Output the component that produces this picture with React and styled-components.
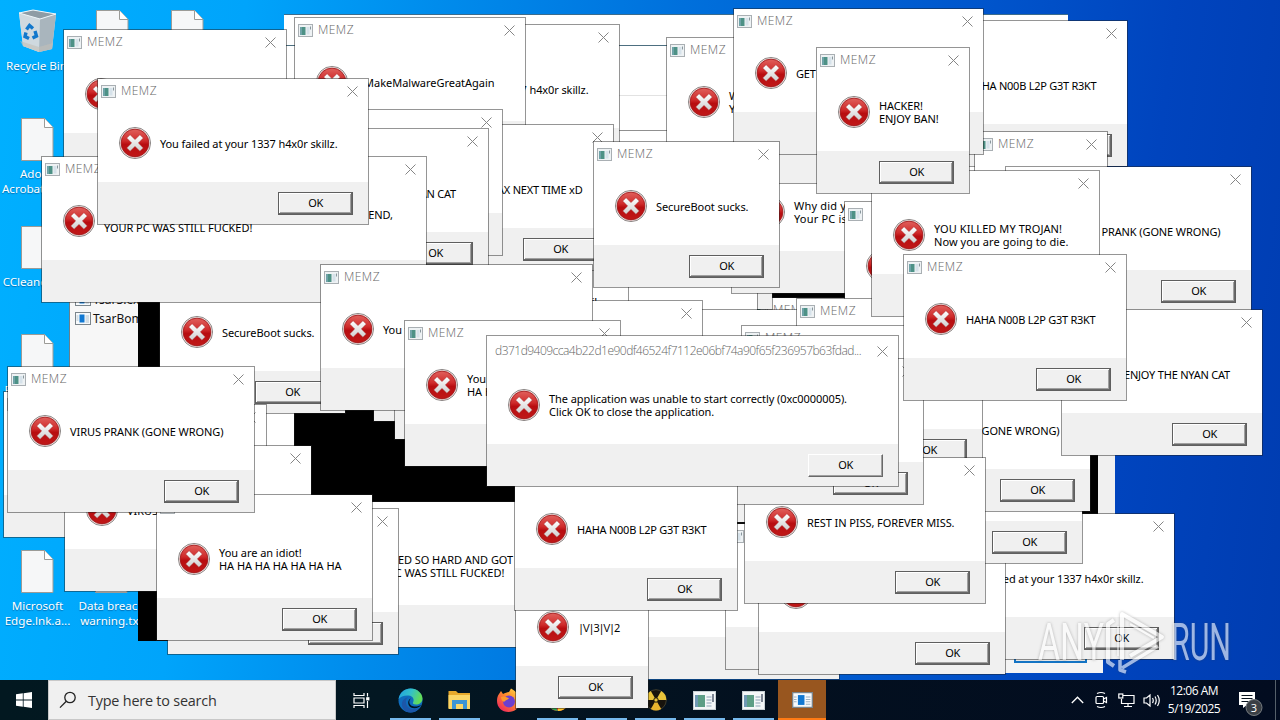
import React, { useLayoutEffect, useRef, useState } from "react";
import styled, { createGlobalStyle } from "styled-components";

const GlobalStyle = createGlobalStyle`
  * {
    box-sizing: border-box;
  }
  body {
    margin: 0;
    overflow: hidden;
    font-family: "Noto Sans", "Open Sans", sans-serif;
  }
`;

const Screen = styled.div`
  width: 1280px;
  height: 720px;
  position: relative;
  overflow: hidden;
  display: flex;
  flex-direction: column;
  background: linear-gradient(
    97deg,
    #00b0ff 0%,
    #00a4fb 18%,
    #008cec 32%,
    #0070dc 50%,
    #0055cc 72%,
    #0044be 86%,
    #003cb0 100%
  );
`;

const Desktop = styled.div`
  flex: 1;
  position: relative;
`;

/* desktop shortcuts */

const Shortcut = styled.div`
  position: absolute;
  left: ${(p) => p.$x}px;
  top: ${(p) => p.$y}px;
  width: 75px;
  display: flex;
  flex-direction: column;
  align-items: center;
  gap: ${(p) => p.$gap || 5}px;
`;

const ShortcutLabel = styled.div`
  color: #fff;
  font-size: 11.6px;
  line-height: 15px;
  text-align: center;
  white-space: pre;
  text-shadow: 0 1px 1px rgba(0, 40, 90, 0.45);
`;

/* windows, all placed freely on the desktop */

const Frame = styled.div`
  position: absolute;
  left: ${(p) => p.$x}px;
  top: ${(p) => p.$y}px;
  width: ${(p) => p.$w}px;
  height: ${(p) => p.$h || 147}px;
  border: 1px solid rgba(30, 30, 30, 0.47);
  background: #fff;
  background-clip: padding-box;
  display: flex;
  flex-direction: column;
`;

const TitleBar = styled.div`
  height: ${(p) => p.$h}px;
  flex: none;
  display: flex;
  align-items: center;
  padding: 0 10px 0 ${(p) => (p.$bare ? 8 : 3)}px;
`;

const Title = styled.div`
  flex: 1;
  font-family: "Open Sans", "Noto Sans", sans-serif;
  font-weight: 300;
  font-size: 12px;
  line-height: 16px;
  color: #666;
  margin-left: ${(p) => (p.$bare ? 0 : 5)}px;
  padding-bottom: 1px;
  white-space: nowrap;
`;

const Body = styled.div`
  height: 78px;
  flex: none;
  display: flex;
  align-items: center;
  padding-left: 20px;
`;

const Message = styled.div`
  margin-left: 8px;
  font-size: 11px;
  line-height: 13px;
  color: #000;
  padding-top: ${(p) => (p.$two ? 0 : 1)}px;
`;

const Line = styled.span`
  display: inline-block;
  white-space: pre;
`;

const Footer = styled.div`
  flex: 1;
  background: #f0f0f0;
  display: flex;
  justify-content: flex-end;
  align-items: flex-start;
  padding: 10px 15px 0 0;
`;

const OkButton = styled.div`
  width: 75px;
  height: 23px;
  background: #f0f0f0;
  border: 1px solid ${(p) => (p.$plain ? "#696969" : "#5f5f5f")};
  border-top-color: ${(p) => (p.$plain ? "#fff" : "#5f5f5f")};
  border-left-color: ${(p) => (p.$plain ? "#fff" : "#5f5f5f")};
  box-shadow: ${(p) =>
    p.$plain
      ? "inset -1px -1px 0 #a0a0a0"
      : "inset -1px -1px 0 #696969, inset 1px 1px 0 #fff, inset -2px -2px 0 #a0a0a0"};
  display: flex;
  align-items: center;
  justify-content: center;
  font-size: 11px;
  line-height: 13px;
  letter-spacing: -0.4px;
  padding-bottom: 2px;
  color: #000;
`;

const Plain = styled.div`
  position: absolute;
  left: ${(p) => p.$x}px;
  top: ${(p) => p.$y}px;
  width: ${(p) => p.$w}px;
  height: ${(p) => p.$h}px;
  background: ${(p) => p.$bg || "#fff"};
`;

const Explorer = styled(Plain)`
  border-top: 1px solid #3c6c8c;
  display: flex;
  flex-direction: column;
`;

const ExplorerRow = styled.div`
  height: ${(p) => p.$h}px;
  border-bottom: 1px solid ${(p) => p.$c};
`;

const FileList = styled(Plain)`
  border-left: 1px solid #6c7f8a;
  display: flex;
  flex-direction: column;
  gap: 3px;
  padding: 31px 0 0 5px;
`;

const FileRow = styled.div`
  display: flex;
  align-items: center;
  gap: 2px;
  height: 16px;
  font-size: 12px;
  color: #111;
  white-space: nowrap;
`;

const Console = styled(Plain)`
  display: flex;
  justify-content: flex-end;
`;

const ScrollTrack = styled.div`
  width: 17px;
  background: #f0f0f0;
`;

const OldButton = styled(Plain)`
  border: 2px solid #1474c4;
`;

/* taskbar */

const Taskbar = styled.div`
  height: 40px;
  flex: none;
  display: flex;
  background: linear-gradient(90deg, #021820 0%, #031722 30%, #03101f 60%, #020c20 100%);
`;

const StartButton = styled.div`
  width: 48px;
  display: flex;
  align-items: center;
  justify-content: center;
`;

const Search = styled.div`
  width: 288px;
  background: #f0f0f0;
  border: 1px solid #c8c8c8;
  display: flex;
  align-items: center;
  gap: 11px;
  padding-left: 10px;
  font-family: "Open Sans", sans-serif;
  font-size: 14.4px;
  letter-spacing: -0.2px;
  color: #333;
`;

const TaskItem = styled.div`
  width: ${(p) => p.$w || 49}px;
  display: flex;
  align-items: center;
  justify-content: center;
  position: relative;
  background: ${(p) => (p.$active ? "#98561f" : "transparent")};
  &::after {
    content: "";
    display: ${(p) => (p.$line ? "block" : "none")};
    position: absolute;
    bottom: 0;
    height: 2px;
    left: ${(p) => (p.$active ? 0 : 4)}px;
    right: ${(p) => (p.$active ? 0 : 4)}px;
    background: ${(p) => (p.$active ? "#ff7a14" : "#76b9ed")};
  }
`;

const Tray = styled.div`
  margin-left: auto;
  display: flex;
  align-items: center;
`;

const TrayIcons = styled.div`
  display: flex;
  align-items: center;
  gap: 8px;
`;

const Clock = styled.div`
  width: 60px;
  margin-left: 3px;
  color: #fff;
  font-family: "Open Sans", sans-serif;
  font-size: 12px;
  line-height: 18px;
  letter-spacing: -0.5px;
  text-align: center;
  white-space: nowrap;
`;

const Notice = styled.div`
  width: 30px;
  margin: 0 7px 0 14px;
  height: 40px;
`;

const ShowDesktop = styled.div`
  width: 5px;
  height: 40px;
  border-left: 1px solid #55606a;
`;

const Overlay = styled.svg`
  position: absolute;
  left: 1030px;
  top: 602px;
  opacity: 0.62;
  filter: drop-shadow(0 0 1.5px rgba(60, 60, 60, 0.55));
`;

/* drawings */

const AppIcon = () => (
  <svg width="15" height="13" viewBox="0 0 15 13">
    <rect x="0.5" y="0.5" width="14" height="12" fill="#eef2f4" stroke="#a9afb3" />
    <rect x="2" y="3" width="5.5" height="8" fill="#4d9186" />
    <rect x="2" y="3" width="2" height="8" fill="#6fa3a8" />
    <rect x="8.5" y="3" width="3" height="7.5" fill="#d6e2ea" />
    <rect x="12" y="2.5" width="1" height="3" fill="#8a979d" />
  </svg>
);

const BlueIcon = ({ w = 16, h = 13 }) => (
  <svg width={w} height={h} viewBox="0 0 16 13" preserveAspectRatio="none">
    <rect x="0.5" y="0.5" width="15" height="12" fill="#f7fafc" stroke="#7b858c" />
    <rect x="4.5" y="2.5" width="5" height="8" fill="#1178d2" />
    <path d="M10.5 4h3.5M10.5 6h3.5M10.5 8h3.5M10.5 10h3.5M1.5 4h2M1.5 6h2M1.5 8h2" stroke="#9fb2c2" strokeWidth="0.8" />
  </svg>
);

const CloseIcon = () => (
  <svg width="11" height="11" viewBox="0 0 11 11">
    <path d="M0.5 0.5l10 10M10.5 0.5l-10 10" stroke="#858585" strokeWidth="1" fill="none" />
  </svg>
);

const ErrorIcon = () => (
  <svg width="34" height="34" viewBox="0 0 34 34">
    <defs>
      <linearGradient id="errFill" x1="0" y1="0" x2="0" y2="1">
        <stop offset="0" stopColor="#e0605c" />
        <stop offset="0.42" stopColor="#cf2b2b" />
        <stop offset="0.55" stopColor="#b80d10" />
        <stop offset="1" stopColor="#c01818" />
      </linearGradient>
      <linearGradient id="errX" x1="0" y1="0" x2="0" y2="1">
        <stop offset="0" stopColor="#fff" />
        <stop offset="1" stopColor="#cfcfcf" />
      </linearGradient>
    </defs>
    <circle cx="17" cy="17" r="15.6" fill="#f1e3e2" stroke="#85807f" strokeWidth="0.9" />
    <circle cx="17" cy="17" r="13.9" fill="url(#errFill)" stroke="#9c1518" strokeWidth="0.8" />
    <path
      d="M8.7 12.1l3.4-3.4 4.900 4.900 4.900-4.900 3.400 3.400-4.900 4.900 4.900 4.900-3.400 3.400-4.900-4.900-4.900 4.900-3.400-3.400 4.900-4.900z"
      fill="url(#errX)"
      stroke="#a8282a"
      strokeWidth="0.5"
    />
  </svg>
);

const DocIcon = () => (
  <svg width="33" height="43" viewBox="0 0 33 43">
    <path d="M0.5 0.5H23.5L32 9.5V42.5H0.5z" fill="#f6f7f8" stroke="#9b9b97" />
    <path d="M23.5 0.5V9.5H32" fill="#fff" stroke="#9b9b97" />
  </svg>
);

const RecycleIcon = () => (
  <svg width="40" height="44" viewBox="0 0 40 44">
    <path d="M2 4L16 1L39 5L35 40L22 43L6 37z" fill="#dbe7ee" opacity="0.92" />
    <path d="M2 4L23 10L22 43L6 37z" fill="#cfd9df" />
    <path d="M23 10L39 5L35 40L22 43z" fill="#a9b5bd" />
    <path d="M2 4L16 1L39 5L23 10z" fill="#8e9ca5" stroke="#eef6fa" strokeWidth="1" />
    <path d="M3 32L22 38L36 34L35 40L22 43L6 37z" fill="#c3bfb8" opacity="0.6" />
    <path
      d="M9.500 20.500l3-4 3.500 3M18 22l1.500 5-4 2M12 29.500l-4-2 1-4"
      fill="none"
      stroke="#1278cc"
      strokeWidth="3.400"
    />
  </svg>
);

const EdgeIcon = () => (
  <svg width="25" height="25" viewBox="0 0 25 25">
    <defs>
      <linearGradient id="edgeA" x1="0" y1="0" x2="1" y2="0.3">
        <stop offset="0" stopColor="#1f9fe0" />
        <stop offset="0.55" stopColor="#34c1c8" />
        <stop offset="1" stopColor="#62dc5a" />
      </linearGradient>
    </defs>
    <circle cx="12.5" cy="12.5" r="12" fill="#0f6cbd" />
    <path d="M0.6 11C2 4 7 0.5 12.5 0.5C19.500 0.500 24.500 5.500 24.500 10.500C24.500 14.500 21 16.500 18 16.500C15.500 16.500 14.500 15.500 15 14.500C16.500 12 15.500 8 10.500 7.500C6 7.200 2 9 0.600 11z" fill="url(#edgeA)" />
    <path d="M10 9.500C7.500 11 7 15 9.500 18.500C12 21.500 17 22 21.500 19.500C19 23 16 24.500 12.500 24.500C7 24.500 3 19.500 4 14.500C5 11 7.500 9.500 10 9.500z" fill="#1c56a8" />
    <path d="M13 10.500C10.500 12 10.500 17 15 18.300C18 19 21.500 18 23 17C22 19.300 17 21.500 13 19.500C9 17 9.500 11.500 13 10.500z" fill="#03131f" />
  </svg>
);

const FolderIcon = () => (
  <svg width="23" height="20" viewBox="0 0 23 20">
    <path d="M0.500 1H8L10 3H22V18H0.500z" fill="#e7a92c" />
    <path d="M0.500 5H22V19H0.500z" fill="#fbd667" />
    <path d="M4 10H19V19H15V14H8V19H4z" fill="#3d95d4" />
  </svg>
);

const FirefoxIcon = () => (
  <svg width="25" height="25" viewBox="0 0 25 25">
    <defs>
      <linearGradient id="fox" x1="1" y1="0" x2="0.200" y2="1">
        <stop offset="0" stopColor="#ffe14a" />
        <stop offset="0.450" stopColor="#ff8f2a" />
        <stop offset="1" stopColor="#f0245e" />
      </linearGradient>
    </defs>
    <path d="M3 6L5 3L7 6C9 5 11 4 13 4L15 0.500C21 4 24.500 8 24 14C23.500 20 18.500 24 12.500 24C6 24 1 19.500 1 13C1 10 1.500 8 3 6z" fill="url(#fox)" />
    <circle cx="13" cy="13.500" r="6" fill="#6c3fd0" />
    <path d="M5 9C8 7.500 11 9 13 10.500C11 12 9 12.500 8 14C6 13 5 11 5 9z" fill="#ff9a2c" />
  </svg>
);

const ChromeIcon = () => (
  <svg width="24" height="24" viewBox="0 0 24 24">
    <circle cx="12" cy="12" r="11" fill="#e5392f" />
    <path d="M2.500 6.500L12 23A11 11 0 0 1 2.500 6.500z" fill="#2fa34f" />
    <path d="M12 23A11 11 0 0 0 22.500 8H12z" fill="#fbc62b" />
    <circle cx="12" cy="12" r="5" fill="#3b7ded" stroke="#fff" strokeWidth="1.500" />
  </svg>
);

const RadiationIcon = () => (
  <svg width="22" height="22" viewBox="0 0 22 22">
    <circle cx="11" cy="11" r="10.300" fill="#17130c" stroke="#4d4630" strokeWidth="0.800" />
    <path d="M11 11L0.700 11A10.300 10.300 0 0 1 5.800 2z" fill="#e9c33a" />
    <path d="M11 11L16.200 2A10.300 10.300 0 0 1 21.300 11z" fill="#e9c33a" />
    <path d="M11 11L16.200 20A10.300 10.300 0 0 1 5.800 20z" fill="#e9b52e" />
    <circle cx="11" cy="11" r="2.200" fill="#e9c33a" stroke="#17130c" />
  </svg>
);

const TaskAppIcon = () => (
  <svg width="23" height="19" viewBox="0 0 23 19">
    <rect x="0.500" y="0.500" width="22" height="18" fill="#f4f7f8" stroke="#c8d0d4" />
    <rect x="2" y="4" width="10" height="12" fill="#5d9e86" />
    <rect x="2" y="4" width="3" height="12" fill="#7099b4" />
    <path d="M13.500 6h5M13.500 9h5M13.500 12h5M13.500 15h5" stroke="#b0c0cc" strokeWidth="1.400" />
    <path d="M20 3v8" stroke="#2d3a50" strokeWidth="1.200" />
  </svg>
);

const WindowsLogo = () => (
  <svg width="16" height="16" viewBox="0 0 16 16">
    <path d="M0 2.200L6.800 1.300V7.500H0zM7.600 1.200L16 0V7.500H7.600zM0 8.400H6.800V14.700L0 13.800zM7.600 8.400H16V16L7.600 14.800z" fill="#fff" />
  </svg>
);

const SearchIcon = () => (
  <svg width="18" height="18" viewBox="0 0 18 18" fill="none" stroke="#222" strokeWidth="1.300">
    <circle cx="11" cy="6.500" r="5.200" />
    <path d="M7.300 10.300L1 16.600" />
  </svg>
);

const TaskViewIcon = () => (
  <svg width="17" height="17" viewBox="0 0 17 17" fill="none" stroke="#fff" strokeWidth="1.200">
    <path d="M1 1v2.500h10V1M1 16v-2.500h10V16M1 6h10v5H1zM14.500 1v3.500M14.500 9v7" />
    <rect x="13.800" y="5.800" width="2" height="2" fill="#fff" />
  </svg>
);

/* Spreads the letters of a text so that its widest line takes the given width. */
const FitText = ({ text, width }) => {
  const ref = useRef(null);
  const [spacing, setSpacing] = useState(0);
  useLayoutEffect(() => {
    const longest = Math.max(...text.split("\n").map((l) => l.length));
    setSpacing((width - ref.current.getBoundingClientRect().width) / longest);
  }, []);
  return (
    <Line ref={ref} style={{ letterSpacing: `${spacing}px` }}>
      {text}
    </Line>
  );
};

const Dialog = ({ x, y, w, text, cut, title = "MEMZ", ok = true, system = false }) => (
  <Frame $x={x} $y={y} $w={w} $h={system ? 152 : 147}>
    <TitleBar $h={system ? 30 : 25} $bare={system}>
      {!system && <AppIcon />}
      <Title $bare={system}>
        {title && <FitText text={title} width={system ? 366 : 36} />}
      </Title>
      <CloseIcon />
    </TitleBar>
    <Body>
      <ErrorIcon />
      {text && (
        <Message $two={text.includes("\n")}>
          <FitText text={text} width={cut || w - 94.5} />
        </Message>
      )}
    </Body>
    <Footer>{ok && <OkButton $plain={system}>OK</OkButton>}</Footer>
  </Frame>
);

const FAILED = "You failed at your 1337 h4x0r skillz.";
const NOOB = "HAHA N00B L2P G3T R3KT";
const PRANK = "VIRUS PRANK (GONE WRONG)";
const HAX = "GET BETTER HAX NEXT TIME xD";
const NYAN = "ENJOY THE NYAN CAT";
const REST = "REST IN PISS, FOREVER MISS.";
const SECURE = "SecureBoot sucks.";
const GREAT = "#MakeMalwareGreatAgain";
const LEET = "|\\/|3|\\/|2";
const IDIOT = "You are an idiot!\nHA HA HA HA HA HA HA";
const TRIED =
  "YOU TRIED SO HARD AND GOT SO FAR, BUT IN THE END,\nYOUR PC WAS STILL FUCKED!";
const WHY = "Why did you even tried to kill MEMZ?\nYour PC is fucked.";
const BONZI = "Well, hello there. I don't believe we've been properly introduced. I'm Bonzi!";

/* back to front; buried windows carry no captions */
const dialogs = [
  { x: 3, y: 391, w: 292, title: "", ok: false },
  { x: 373, y: 275, w: 224, title: "", ok: false },
  { x: 394, y: 293, w: 247, title: "", ok: false },
  { x: 749, y: 297, w: 202, ok: false },
  { x: 526, y: 163, w: 247, title: "", ok: false },
  { x: 534, y: 215, w: 224, title: "", ok: false },
  { x: 167, y: 236, w: 462, title: "", text: BONZI, ok: false, cut: 367 },
  { x: 159, y: 267, w: 187, title: "", text: SECURE },
  { x: 65, y: 404, w: 202, title: "", ok: false },
  { x: 348, y: 24, w: 272, title: "", text: FAILED, ok: false },
  { x: 294, y: 17, w: 232, text: GREAT, ok: false },
  { x: 731, y: 147, w: 290, title: "", text: WHY, ok: false },
  { x: 666, y: 37, w: 290, text: WHY, ok: false },
  { x: 364, y: 124, w: 250, title: "", text: HAX },
  { x: 271, y: 109, w: 232, title: "", ok: false },
  { x: 287, y: 128, w: 202, title: "", text: NYAN, cut: 106 },
  { x: 63, y: 29, w: 224, ok: false },
  { x: 41, y: 156, w: 386, text: TRIED, ok: false, cut: 289 },
  { x: 97, y: 78, w: 272, text: FAILED },
  { x: 904, y: 20, w: 224, title: "", text: NOOB },
  { x: 974, y: 131, w: 134, ok: false },
  { x: 733, y: 8, w: 251, text: HAX, ok: false },
  { x: 1005, y: 166, w: 247, title: "", text: PRANK },
  { x: 603, y: 309, w: 250, title: "", ok: false },
  { x: 431, y: 300, w: 272, title: "", ok: false },
  { x: 844, y: 201, w: 187, title: "", ok: false },
  { x: 796, y: 298, w: 187, ok: false },
  { x: 871, y: 170, w: 229, title: "", text: "YOU KILLED MY TROJAN!\nNow you are going to die.", ok: false },
  { x: 816, y: 47, w: 154, text: "HACKER!\nENJOY BAN!" },
  { x: 593, y: 141, w: 187, text: SECURE },
  { x: 903, y: 513, w: 272, title: "", text: FAILED },
  { x: 293, y: 501, w: 386, title: "", text: TRIED, cut: 289, ok: false },
  { x: 560, y: 376, w: 202, title: "", ok: false },
  { x: 568, y: 533, w: 272, title: "", ok: false },
  { x: 725, y: 523, w: 202, title: "", ok: false },
  { x: 758, y: 528, w: 248, title: "" },
  { x: 881, y: 417, w: 202, title: "" },
  { x: 844, y: 365, w: 247, title: "", text: PRANK },
  { x: 1061, y: 309, w: 202, title: "", text: NYAN, cut: 106 },
  { x: 741, y: 325, w: 242 },
  { x: 744, y: 457, w: 242, title: "", text: REST },
  { x: 673, y: 358, w: 251, title: "" },
  { x: 903, y: 254, w: 224, text: NOOB },
  { x: 515, y: 562, w: 134, title: "", text: LEET, cut: 41 },
  { x: 514, y: 464, w: 224, title: "", text: NOOB },
  { x: 64, y: 445, w: 248, title: "", text: PRANK, ok: false },
  { x: 167, y: 508, w: 232, title: "" },
  { x: 156, y: 494, w: 217, title: "", text: IDIOT },
  { x: 7, y: 366, w: 248, text: PRANK },
  { x: 320, y: 264, w: 273, text: FAILED, ok: false },
  { x: 404, y: 320, w: 217, text: IDIOT, ok: false },
  {
    x: 486,
    y: 335,
    w: 413,
    system: true,
    cut: 298,
    title: "d371d9409cca4b22d1e90df46524f7112e06bf74a90f65f236957b63fdad...",
    text: "The application was unable to start correctly (0xc0000005).\nClick OK to close the application.",
  },
];

const shortcuts = [
  { x: 75, y: 10, label: "" },
  { x: 150, y: 10, label: "" },
  { x: 0, y: 118, label: "Adobe\nAcrobat.lnk..." },
  { x: 0, y: 226, label: "CCleaner.ln..." },
  { x: 0, y: 334, label: "Firefox.lnk..." },
  { x: 0, y: 550, label: "Microsoft\nEdge.lnk.a..." },
  { x: 74, y: 550, label: "Data breach\nwarning.txt" },
];

const App = () => {
  return (
    <>
      <GlobalStyle />
      <Screen>
        <Desktop>
          <Shortcut $x={-1} $y={9} $gap={5}>
            <RecycleIcon />
            <ShortcutLabel>Recycle Bin</ShortcutLabel>
          </Shortcut>
          {shortcuts.map((s, i) => (
            <Shortcut key={i} $x={s.x} $y={s.y}>
              <DocIcon />
              <ShortcutLabel>{s.label}</ShortcutLabel>
            </Shortcut>
          ))}
        </Desktop>
        <Taskbar>
          <StartButton>
            <WindowsLogo />
          </StartButton>
          <Search>
            <SearchIcon />
            Type here to search
          </Search>
          <TaskItem $w={50}>
            <TaskViewIcon />
          </TaskItem>
          <TaskItem $line>
            <EdgeIcon />
          </TaskItem>
          <TaskItem $line>
            <FolderIcon />
          </TaskItem>
          <TaskItem>
            <FirefoxIcon />
          </TaskItem>
          <TaskItem $line>
            <ChromeIcon />
          </TaskItem>
          <TaskItem $line />
          <TaskItem $line>
            <RadiationIcon />
          </TaskItem>
          <TaskItem $line>
            <TaskAppIcon />
          </TaskItem>
          <TaskItem $line>
            <TaskAppIcon />
          </TaskItem>
          <TaskItem $w={48} $line $active>
            <BlueIcon w={21} h={16} />
          </TaskItem>
          <Tray>
            <TrayIcons>
              <svg width="13" height="8" viewBox="0 0 13 8" fill="none" stroke="#fff" strokeWidth="1.300">
                <path d="M0.800 7L6.500 1.200L12.200 7" />
              </svg>
              <svg width="18" height="18" viewBox="0 0 18 18" fill="none" stroke="#fff" strokeWidth="1.200">
                <rect x="4" y="5.500" width="7.500" height="7" rx="1" />
                <path d="M11.500 8l3-1.500v5L11.500 10M5 2.500Q9 0.500 13 2.500M5 15.500Q9 17.500 13 15.500" />
              </svg>
              <svg width="17" height="15" viewBox="0 0 17 15" fill="none" stroke="#fff" strokeWidth="1.200">
                <path d="M5 2.500H16V10.500H3.500V6M10 10.500V13.500M6 13.500h8" />
                <rect x="0.800" y="1" width="4" height="4" />
              </svg>
              <svg width="18" height="15" viewBox="0 0 18 15" fill="none" stroke="#fff" strokeWidth="1.200">
                <path d="M1 5h2.500L7 2v11L3.500 10H1zM9.500 5q1.500 2.500 0 5M12 3.500q2.500 4 0 8M14.500 2q3.500 5.500 0 11" />
              </svg>
            </TrayIcons>
            <Clock>
              12:06 AM
              <br />
              5/19/2025
            </Clock>
            <Notice>
              <svg width="30" height="40" viewBox="0 0 30 40">
                <path d="M1 12H17V25H9L5 28V25H1z" fill="#fff" />
                <path d="M3.500 15.500h11M3.500 18.500h11M3.500 21.500h7" stroke="#07131f" strokeWidth="1.200" />
                <circle cx="16" cy="27.500" r="8" fill="#3a3f45" stroke="#777c80" />
                <text x="16" y="31.500" fill="#fff" fontSize="11" textAnchor="middle" fontFamily="Open Sans">
                  3
                </text>
              </svg>
            </Notice>
            <ShowDesktop />
          </Tray>
        </Taskbar>

        <Explorer $x={284} $y={14} $w={784} $h={200}>
          <ExplorerRow $h={31} $c="#4d6f80" />
          <ExplorerRow $h={50} $c="#e2e2e2" />
          <ExplorerRow $h={35} $c="#909090" />
        </Explorer>
        <FileList $x={69} $y={260} $w={400} $h={240} $bg="#f7f7f7">
          <FileRow>
            <BlueIcon />
            Tsar3.exe
          </FileRow>
          <FileRow>
            <BlueIcon />
            TsarBomba.exe
          </FileRow>
        </FileList>
        <Console $x={138} $y={260} $w={977} $h={381} $bg="#000">
          <ScrollTrack />
        </Console>
        <Plain $x={900} $y={600} $w={203} $h={73} $bg="#f4f4f4" />
        <OldButton $x={1014} $y={640} $w={73} $h={23} $bg="#e6e6e6" />

        {dialogs.map((d, i) => (
          <Dialog key={i} {...d} />
        ))}

        <Overlay width="210" height="76" viewBox="0 0 210 76">
          <g fill="#fff" fontFamily="Roboto" fontWeight="400" fontSize="51">
            <text transform="translate(8 58) scale(0.660 1)" textLength="100" lengthAdjust="spacingAndGlyphs">
              ANY
            </text>
            <text transform="translate(141 58) scale(0.600 1)" textLength="100" lengthAdjust="spacingAndGlyphs">
              RUN
            </text>
          </g>
          <g fill="none" stroke="#fff" strokeLinejoin="round">
            <path d="M92 58V12L132 35L100 54" strokeWidth="4" />
            <path d="M100 22L124 36" strokeWidth="2.500" />
            <path d="M84 18L78 22V60L84 64" strokeWidth="4" />
            <path d="M92 66L128 44M90 58V68L96 70" strokeWidth="3.500" />
            <path d="M88 24V54" strokeWidth="1.500" />
          </g>
        </Overlay>
      </Screen>
    </>
  );
};

export default App;
